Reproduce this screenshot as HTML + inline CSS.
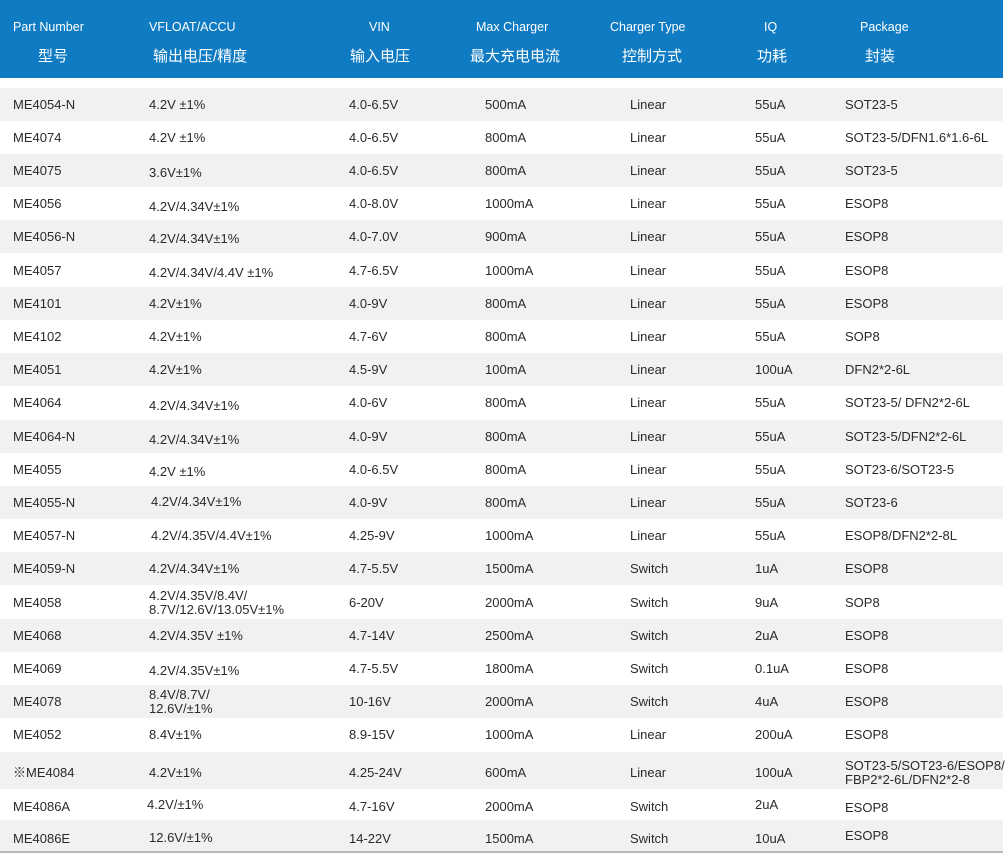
<!DOCTYPE html>
<html><head><meta charset="utf-8"><style>
body{margin:0;width:1008px;height:855px;background:#fff;position:relative;overflow:hidden;font-family:"Liberation Sans","Noto Sans CJK SC",sans-serif;color:#2a2a2a}
.hd{position:absolute;left:0;top:0;width:1003px;height:78px;background:#0f7bc3;color:#fff}
.hd div{position:absolute;white-space:nowrap}
.e{top:20px;font-size:12.5px}
.c{top:45px;font-size:15px}
.r{position:absolute;left:0;width:1003px;height:33.2px;font-size:13px}
.r.g{background:#f1f1f1}
.r span{position:absolute;top:10px;white-space:nowrap;line-height:14px}
.r span.t{top:3px}
.bl{position:absolute;left:0;top:851px;width:1003px;height:2px;background:#b8b8b8}
</style></head><body>
<div class="hd">
<div class="e" style="left:13px">Part Number</div><div class="c" style="left:38px">型号</div>
<div class="e" style="left:149px">VFLOAT/ACCU</div><div class="c" style="left:153px">输出电压/精度</div>
<div class="e" style="left:369px">VIN</div><div class="c" style="left:350px">输入电压</div>
<div class="e" style="left:476px">Max Charger</div><div class="c" style="left:470px">最大充电电流</div>
<div class="e" style="left:610px">Charger Type</div><div class="c" style="left:622px">控制方式</div>
<div class="e" style="left:764px">IQ</div><div class="c" style="left:757px">功耗</div>
<div class="e" style="left:860px">Package</div><div class="c" style="left:865px">封装</div>
</div>
<div class="r g" style="top:87.5px"><span style="left:13px">ME4054-N</span><span style="left:149px">4.2V ±1%</span><span style="left:349px">4.0-6.5V</span><span style="left:485px">500mA</span><span style="left:630px">Linear</span><span style="left:755px">55uA</span><span style="left:845px">SOT23-5</span></div>
<div class="r" style="top:120.7px"><span style="left:13px">ME4074</span><span style="left:149px">4.2V ±1%</span><span style="left:349px">4.0-6.5V</span><span style="left:485px">800mA</span><span style="left:630px">Linear</span><span style="left:755px">55uA</span><span style="left:845px">SOT23-5/DFN1.6*1.6-6L</span></div>
<div class="r g" style="top:153.9px"><span style="left:13px">ME4075</span><span style="left:149px;top:12px">3.6V±1%</span><span style="left:349px">4.0-6.5V</span><span style="left:485px">800mA</span><span style="left:630px">Linear</span><span style="left:755px">55uA</span><span style="left:845px">SOT23-5</span></div>
<div class="r" style="top:187.1px"><span style="left:13px">ME4056</span><span style="left:149px;top:13px">4.2V/4.34V±1%</span><span style="left:349px">4.0-8.0V</span><span style="left:485px">1000mA</span><span style="left:630px">Linear</span><span style="left:755px">55uA</span><span style="left:845px">ESOP8</span></div>
<div class="r g" style="top:220.3px"><span style="left:13px">ME4056-N</span><span style="left:149px;top:12px">4.2V/4.34V±1%</span><span style="left:349px">4.0-7.0V</span><span style="left:485px">900mA</span><span style="left:630px">Linear</span><span style="left:755px">55uA</span><span style="left:845px">ESOP8</span></div>
<div class="r" style="top:253.5px"><span style="left:13px">ME4057</span><span style="left:149px;top:12px">4.2V/4.34V/4.4V ±1%</span><span style="left:349px">4.7-6.5V</span><span style="left:485px">1000mA</span><span style="left:630px">Linear</span><span style="left:755px">55uA</span><span style="left:845px">ESOP8</span></div>
<div class="r g" style="top:286.7px"><span style="left:13px">ME4101</span><span style="left:149px">4.2V±1%</span><span style="left:349px">4.0-9V</span><span style="left:485px">800mA</span><span style="left:630px">Linear</span><span style="left:755px">55uA</span><span style="left:845px">ESOP8</span></div>
<div class="r" style="top:319.9px"><span style="left:13px">ME4102</span><span style="left:149px">4.2V±1%</span><span style="left:349px">4.7-6V</span><span style="left:485px">800mA</span><span style="left:630px">Linear</span><span style="left:755px">55uA</span><span style="left:845px">SOP8</span></div>
<div class="r g" style="top:353.1px"><span style="left:13px">ME4051</span><span style="left:149px">4.2V±1%</span><span style="left:349px">4.5-9V</span><span style="left:485px">100mA</span><span style="left:630px">Linear</span><span style="left:755px">100uA</span><span style="left:845px">DFN2*2-6L</span></div>
<div class="r" style="top:386.3px"><span style="left:13px">ME4064</span><span style="left:149px;top:13px">4.2V/4.34V±1%</span><span style="left:349px">4.0-6V</span><span style="left:485px">800mA</span><span style="left:630px">Linear</span><span style="left:755px">55uA</span><span style="left:845px">SOT23-5/ DFN2*2-6L</span></div>
<div class="r g" style="top:419.5px"><span style="left:13px">ME4064-N</span><span style="left:149px;top:13px">4.2V/4.34V±1%</span><span style="left:349px">4.0-9V</span><span style="left:485px">800mA</span><span style="left:630px">Linear</span><span style="left:755px">55uA</span><span style="left:845px">SOT23-5/DFN2*2-6L</span></div>
<div class="r" style="top:452.7px"><span style="left:13px">ME4055</span><span style="left:149px;top:12px">4.2V ±1%</span><span style="left:349px">4.0-6.5V</span><span style="left:485px">800mA</span><span style="left:630px">Linear</span><span style="left:755px">55uA</span><span style="left:845px">SOT23-6/SOT23-5</span></div>
<div class="r g" style="top:485.9px"><span style="left:13px">ME4055-N</span><span style="left:151px;top:9px">4.2V/4.34V±1%</span><span style="left:349px">4.0-9V</span><span style="left:485px">800mA</span><span style="left:630px">Linear</span><span style="left:755px">55uA</span><span style="left:845px">SOT23-6</span></div>
<div class="r" style="top:519.1px"><span style="left:13px">ME4057-N</span><span style="left:151px">4.2V/4.35V/4.4V±1%</span><span style="left:349px">4.25-9V</span><span style="left:485px">1000mA</span><span style="left:630px">Linear</span><span style="left:755px">55uA</span><span style="left:845px">ESOP8/DFN2*2-8L</span></div>
<div class="r g" style="top:552.3px"><span style="left:13px">ME4059-N</span><span style="left:149px">4.2V/4.34V±1%</span><span style="left:349px">4.7-5.5V</span><span style="left:485px">1500mA</span><span style="left:630px">Switch</span><span style="left:755px">1uA</span><span style="left:845px">ESOP8</span></div>
<div class="r" style="top:585.5px"><span style="left:13px">ME4058</span><span class="t" style="left:149px">4.2V/4.35V/8.4V/<br>8.7V/12.6V/13.05V±1%</span><span style="left:349px">6-20V</span><span style="left:485px">2000mA</span><span style="left:630px">Switch</span><span style="left:755px">9uA</span><span style="left:845px">SOP8</span></div>
<div class="r g" style="top:618.7px"><span style="left:13px">ME4068</span><span style="left:149px">4.2V/4.35V ±1%</span><span style="left:349px">4.7-14V</span><span style="left:485px">2500mA</span><span style="left:630px">Switch</span><span style="left:755px">2uA</span><span style="left:845px">ESOP8</span></div>
<div class="r" style="top:651.9px"><span style="left:13px">ME4069</span><span style="left:149px;top:12px">4.2V/4.35V±1%</span><span style="left:349px">4.7-5.5V</span><span style="left:485px">1800mA</span><span style="left:630px">Switch</span><span style="left:755px">0.1uA</span><span style="left:845px">ESOP8</span></div>
<div class="r g" style="top:685.1px"><span style="left:13px">ME4078</span><span class="t" style="left:149px">8.4V/8.7V/<br>12.6V/±1%</span><span style="left:349px">10-16V</span><span style="left:485px">2000mA</span><span style="left:630px">Switch</span><span style="left:755px">4uA</span><span style="left:845px">ESOP8</span></div>
<div class="r" style="top:718.3px"><span style="left:13px">ME4052</span><span style="left:149px">8.4V±1%</span><span style="left:349px">8.9-15V</span><span style="left:485px">1000mA</span><span style="left:630px">Linear</span><span style="left:755px">200uA</span><span style="left:845px">ESOP8</span></div>
<div class="r g" style="top:751.5px;height:37px"><span style="left:13px;top:14px">※ME4084</span><span style="left:149px;top:14px">4.2V±1%</span><span style="left:349px;top:14px">4.25-24V</span><span style="left:485px;top:14px">600mA</span><span style="left:630px;top:14px">Linear</span><span style="left:755px;top:14px">100uA</span><span class="t" style="left:845px;top:7px">SOT23-5/SOT23-6/ESOP8/<br>FBP2*2-6L/DFN2*2-8</span></div>
<div class="r" style="top:788.5px;height:31px"><span style="left:13px;top:11px">ME4086A</span><span style="left:147px;top:9px">4.2V/±1%</span><span style="left:349px;top:11px">4.7-16V</span><span style="left:485px;top:11px">2000mA</span><span style="left:630px;top:11px">Switch</span><span style="left:755px;top:9px">2uA</span><span style="left:845px;top:12px">ESOP8</span></div>
<div class="r g" style="top:819.5px;height:31.5px"><span style="left:13px;top:12px">ME4086E</span><span style="left:149px;top:11px">12.6V/±1%</span><span style="left:349px;top:12px">14-22V</span><span style="left:485px;top:12px">1500mA</span><span style="left:630px;top:12px">Switch</span><span style="left:755px;top:12px">10uA</span><span style="left:845px;top:9px">ESOP8</span></div>
<div class="bl"></div>
</body></html>
